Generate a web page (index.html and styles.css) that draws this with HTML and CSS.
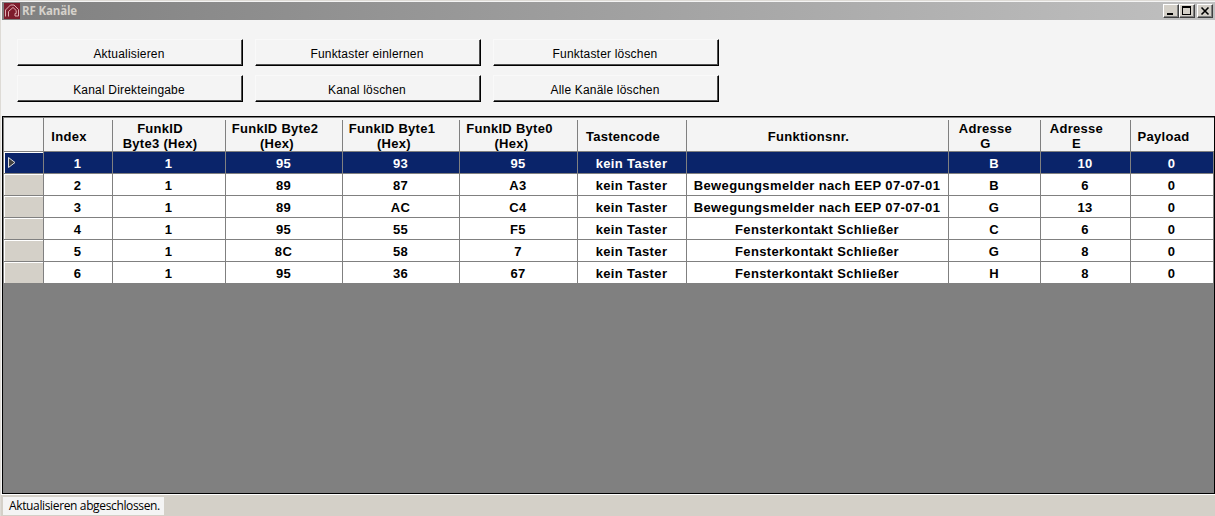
FILE: index.html
```html
<!DOCTYPE html>
<html lang="de">
<head>
<meta charset="utf-8">
<title>RF Kanäle</title>
<link rel="stylesheet" href="styles.css">
</head>
<body>
<div class="window">
  <header class="titlebar">
    <svg class="logo" width="16" height="16" viewBox="0 0 16 16"><rect width="16" height="16" fill="#7d1c2c"/><g fill="none" stroke="#e0aeb3" stroke-width="1"><path d="M1.500 13.500V7L6.500 2h3.500L14.500 6.500v6.500h-3.500v-2.500h1.200V7.500L9 4.500 4.500 8.500v5"/></g></svg>
    <span class="title">RF Kanäle</span>
    <div class="controls">
      <span class="control"><svg width="14" height="12" shape-rendering="crispEdges"><path d="M3 8h6v2H3z"/></svg></span>
      <span class="control"><svg width="14" height="12" shape-rendering="crispEdges"><path fill-rule="evenodd" d="M2 1h9v9H2zM3 3v6h7V3z"/></svg></span>
      <span class="control close"><svg width="14" height="12"><path d="M3.500 2.500l7 7M10.500 2.500l-7 7" stroke="#000" stroke-width="1.600"/></svg></span>
    </div>
  </header>
  <div class="toolbar">
    <button class="btn">Aktualisieren</button><button class="btn">Funktaster einlernen</button><button class="btn">Funktaster löschen</button>
    <button class="btn">Kanal Direkteingabe</button><button class="btn">Kanal löschen</button><button class="btn">Alle Kanäle löschen</button>
  </div>
  <main class="data">
    <div class="row head"><span></span><span>Index</span><span>FunkID<br>Byte3 (Hex)</span><span>FunkID Byte2<br>&nbsp;(Hex)</span><span>FunkID Byte1<br>&nbsp;(Hex)</span><span>FunkID Byte0<br>&nbsp;(Hex)</span><span>Tastencode</span><span>Funktionsnr.</span><span>Adresse<br>G</span><span>Adresse<br>E</span><span>Payload</span></div>
    <div class="row selected"><span class="handle"><svg width="10" height="13" viewBox="0 0 10 13"><path d="M1.500 1.500v10L8 6.500z" fill="#404040" stroke="#ddd"/></svg></span><span>1</span><span>1</span><span>95</span><span>93</span><span>95</span><span>kein Taster</span><span></span><span>B</span><span>10</span><span>0</span></div>
    <div class="row"><span class="handle"></span><span>2</span><span>1</span><span>89</span><span>87</span><span>A3</span><span>kein Taster</span><span>Bewegungsmelder nach EEP 07-07-01</span><span>B</span><span>6</span><span>0</span></div>
    <div class="row"><span class="handle"></span><span>3</span><span>1</span><span>89</span><span>AC</span><span>C4</span><span>kein Taster</span><span>Bewegungsmelder nach EEP 07-07-01</span><span>G</span><span>13</span><span>0</span></div>
    <div class="row"><span class="handle"></span><span>4</span><span>1</span><span>95</span><span>55</span><span>F5</span><span>kein Taster</span><span>Fensterkontakt Schließer</span><span>C</span><span>6</span><span>0</span></div>
    <div class="row"><span class="handle"></span><span>5</span><span>1</span><span>8C</span><span>58</span><span>7</span><span>kein Taster</span><span>Fensterkontakt Schließer</span><span>G</span><span>8</span><span>0</span></div>
    <div class="row"><span class="handle"></span><span>6</span><span>1</span><span>95</span><span>36</span><span>67</span><span>kein Taster</span><span>Fensterkontakt Schließer</span><span>H</span><span>8</span><span>0</span></div>
  </main>
  <footer class="status"><span>Aktualisieren abgeschlossen.</span></footer>
</div>
</body>
</html>
```

FILE: styles.css
```css
* { box-sizing: border-box; }
body { margin: 0; background: #f4f4f4; font-family: "Liberation Sans", sans-serif; color: #000; }
.window { width: 1215px; height: 516px; display: flex; flex-direction: column; padding: 2px 0 0 2px; overflow: hidden; background: #f4f4f4; box-shadow: inset 1px 1px #dedbd6; }
.titlebar { height: 18px; flex: none; display: flex; align-items: center; padding: 0 2px; background: linear-gradient(90deg, #808080, #c0c0c0); }
.logo { flex: none; }
.title { margin-left: 2px; font: bold 11.5px/18px "Open Sans", sans-serif; letter-spacing: -.15px; color: #d6d2cb; }
.controls { margin-left: auto; display: flex; }
.control { width: 16px; height: 14px; background: #d4d0c8; border: 1px solid; border-color: #fff #404040 #404040 #fff; box-shadow: inset -1px -1px #808080; }
.control svg { display: block; }
.close { margin-left: 2px; }
.toolbar { flex: none; height: 96px; display: grid; grid-template-columns: repeat(3, 226px); grid-template-rows: 27px 27px; gap: 9px 12px; padding: 19px 0 0 15px; }
.btn { padding: 3px 2px 0 0; border: solid; border-width: 1px; border-color: #f9f9f9 #000 #000 #f9f9f9; background: #f4f4f4; box-shadow: inset -1px -1px #505050; font: 12px "Liberation Sans", sans-serif; letter-spacing: .19px; color: #000; }
.data { flex: none; height: 378px; width: 1213px; border: 1px solid #000; padding: 1px 0 0 1px; background: #808080; }
.row { display: grid; grid-template-columns: 40px 69px 113px 117px 117px 118px 109px 262px 92px 90px 83px; height: 22px; background: #fff; font-size: 13px; font-weight: bold; letter-spacing: .36px; }
.row > span { border-right: 1px solid #808080; border-bottom: 1px solid #808080; display: flex; align-items: center; justify-content: center; white-space: nowrap; padding: 1px 1px 0 0; }
.row.head { height: 34px; background: #f4f4f4; border-bottom: 1px solid #808080; line-height: 15px; letter-spacing: .28px; text-align: center; }
.row.head > span { border-bottom: 0; padding: 1px 18px 0 0; margin: 2px 0; }
.row.head > span:first-child { margin: 0; }
.row.head > span:last-child { border-right: 0; }
.row.selected { background: #0a246a; color: #fff; }
.row > .handle { background: #d4d0c8; box-shadow: inset 1px 1px #fff; justify-content: flex-start; padding: 0 0 0 3px; }
.row.selected > .handle { background: #0a246a; }
.status { flex: 1; margin-left: -1px; border-top: 1px solid #fff; padding: 1px 0 2px 2px; background: #d4d0c8; }
.status span { display: inline-block; width: 161px; height: 18px; padding-left: 6px; background: #f4f4f4; font: 12px/18px "Open Sans", sans-serif; letter-spacing: -.36px; white-space: nowrap; }
```
